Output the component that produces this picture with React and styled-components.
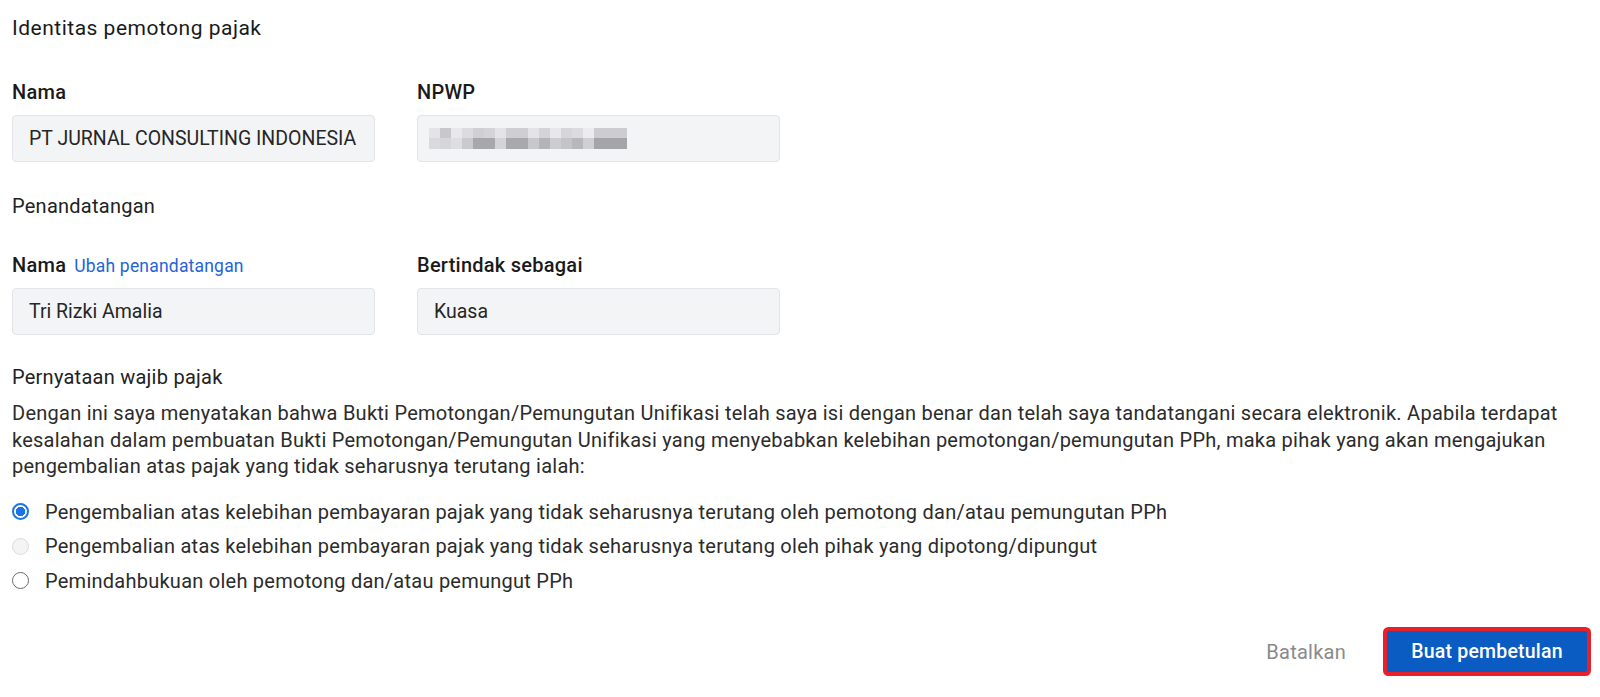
import styled, { createGlobalStyle } from "styled-components";

const GlobalStyle = createGlobalStyle`
  body {
    margin: 0;
    background: #ffffff;
    font-family: "Roboto", "Liberation Sans", sans-serif;
    color: #212121;
  }
`;

const blurTop = [
  "#e4e4e8", "#c8c8cc", "#e8e8ec", "#dcdce0", "#d0d0d4", "#d4d4d8",
  "#e4e4e8", "#cfcfd3", "#cfcfd3", "#e4e4e8", "#d4d4d8", "#e8e8ec",
  "#d6d6da", "#dcdce0", "#ececf0", "#cdcdd1", "#cdcdd1", "#cdcdd1",
];
const blurBottom = [
  "#dadade", "#d6d6da", "#dedee2", "#cacace", "#a8a8ac", "#a8a8ac",
  "#d4d4d8", "#a9a9ad", "#a9a9ad", "#c8c8cc", "#b4b4b8", "#cdcdd1",
  "#c4c4c8", "#b8b8bc", "#d0d0d4", "#a5a5a9", "#a5a5a9", "#a5a5a9",
];

function BlurredNumber() {
  return (
    <BlurSvg width="198" height="21" viewBox="0 0 198 21">
      {blurTop.map((c, i) => (
        <rect key={"t" + i} x={i * 11} y="0" width="11" height="10" fill={c} />
      ))}
      {blurBottom.map((c, i) => (
        <rect key={"b" + i} x={i * 11} y="10" width="11" height="11" fill={c} />
      ))}
    </BlurSvg>
  );
}

export default function App() {
  return (
    <>
      <GlobalStyle />
      <Page>
        <Title>Identitas pemotong pajak</Title>
        <FieldGrid $top={38}>
          <Field>
            <Label>Nama</Label>
            <Input>PT JURNAL CONSULTING INDONESIA</Input>
          </Field>
          <Field>
            <Label>NPWP</Label>
            <Input>
              <BlurredNumber />
            </Input>
          </Field>
        </FieldGrid>

        <SubTitle $top={31}>Penandatangan</SubTitle>
        <FieldGrid $top={34}>
          <Field>
            <Label>
              Nama <LinkText>Ubah penandatangan</LinkText>
            </Label>
            <Input>Tri Rizki Amalia</Input>
          </Field>
          <Field>
            <Label>Bertindak sebagai</Label>
            <Input>Kuasa</Input>
          </Field>
        </FieldGrid>

        <SubTitle $top={29}>Pernyataan wajib pajak</SubTitle>
        <Statement>
          Dengan ini saya menyatakan bahwa Bukti Pemotongan/Pemungutan Unifikasi
          telah saya isi dengan benar dan telah saya tandatangani secara
          elektronik. Apabila terdapat kesalahan dalam pembuatan Bukti
          Pemotongan/Pemungutan Unifikasi yang menyebabkan kelebihan
          pemotongan/pemungutan PPh, maka pihak yang akan mengajukan
          pengembalian atas pajak yang tidak seharusnya terutang ialah:
        </Statement>

        <RadioList>
          <RadioRow>
            <Radio $state="checked" />
            Pengembalian atas kelebihan pembayaran pajak yang tidak seharusnya
            terutang oleh pemotong dan/atau pemungutan PPh
          </RadioRow>
          <RadioRow>
            <Radio $state="disabled" />
            Pengembalian atas kelebihan pembayaran pajak yang tidak seharusnya
            terutang oleh pihak yang dipotong/dipungut
          </RadioRow>
          <RadioRow>
            <Radio $state="empty" />
            Pemindahbukuan oleh pemotong dan/atau pemungut PPh
          </RadioRow>
        </RadioList>

        <Actions>
          <GhostButton>Batalkan</GhostButton>
          <PrimaryButton>Buat pembetulan</PrimaryButton>
        </Actions>
      </Page>
    </>
  );
}

const Page = styled.div`
  padding: 14px 13px 20px 12px;
  letter-spacing: 0.25px;
`;

const Title = styled.h1`
  margin: 0;
  font-size: 21px;
  font-weight: 400;
  line-height: 28px;
  letter-spacing: 0.5px;
  color: #1a1a1a;
`;

const SubTitle = styled.h2`
  margin: ${(p) => p.$top}px 0 0;
  font-size: 20px;
  font-weight: 400;
  line-height: 26px;
  color: #222222;
`;

const FieldGrid = styled.div`
  display: grid;
  grid-template-columns: 363px 363px;
  column-gap: 42px;
  margin-top: ${(p) => p.$top}px;
`;

const Field = styled.div`
  display: flex;
  flex-direction: column;
  gap: 11px;
`;

const Label = styled.div`
  display: flex;
  align-items: baseline;
  gap: 8px;
  height: 24px;
  font-size: 20px;
  font-weight: 500;
  line-height: 24px;
  color: #1a1a1a;
`;

const LinkText = styled.span`
  font-size: 17.5px;
  font-weight: 400;
  letter-spacing: 0.2px;
  color: #2563d8;
  cursor: pointer;
`;

const Input = styled.div`
  box-sizing: border-box;
  display: flex;
  align-items: center;
  height: 47px;
  padding: 0 16px;
  background: #f3f4f6;
  border: 1px solid #e2e4e8;
  border-radius: 4px;
  font-size: 19.5px;
  letter-spacing: 0;
  color: #262626;
  white-space: nowrap;
  overflow: hidden;
`;

const BlurSvg = styled.svg`
  margin-left: -5px;
`;

const Statement = styled.p`
  margin: 10px 0 0;
  font-size: 20px;
  line-height: 26.5px;
  color: #2b2b2b;
`;

const RadioList = styled.div`
  display: flex;
  flex-direction: column;
  margin-top: 15px;
`;

const RadioRow = styled.label`
  display: flex;
  align-items: center;
  gap: 16px;
  height: 34.6px;
  font-size: 20px;
  color: #2b2b2b;
`;

const Radio = styled.span`
  box-sizing: border-box;
  flex: none;
  width: 17px;
  height: 17px;
  border-radius: 50%;
  border: ${(p) =>
    p.$state === "checked"
      ? "2px solid #1a73e8"
      : p.$state === "disabled"
      ? "1px solid #dcdcdc"
      : "1.5px solid #6b6b6b"};
  background: ${(p) =>
    p.$state === "checked"
      ? "radial-gradient(circle, #1a73e8 0 4.5px, #fff 5px)"
      : p.$state === "disabled"
      ? "#f4f4f4"
      : "#fff"};
`;

const Actions = styled.div`
  display: flex;
  justify-content: flex-end;
  align-items: center;
  gap: 21px;
  margin-top: 33px;
`;

const GhostButton = styled.button`
  border: none;
  background: none;
  padding: 0 20px;
  height: 41px;
  font-family: inherit;
  font-size: 20px;
  letter-spacing: 0.25px;
  color: #8a8a8a;
`;

const PrimaryButton = styled.button`
  width: 200px;
  height: 41px;
  border: none;
  border-radius: 2px;
  background: #0a5cc2;
  color: #ffffff;
  font-family: inherit;
  font-size: 19.5px;
  font-weight: 500;
  letter-spacing: 0.2px;
  box-shadow: 0 0 0 4px #e8202a;
`;
